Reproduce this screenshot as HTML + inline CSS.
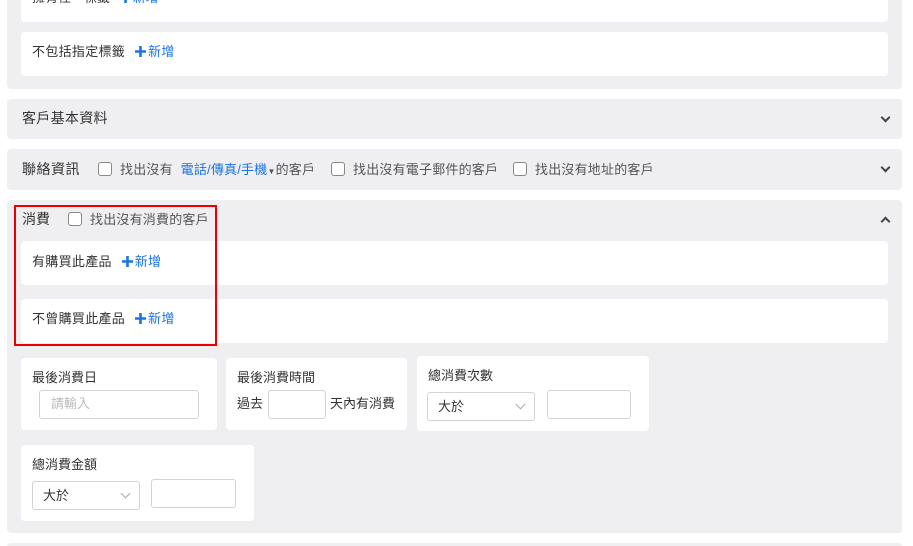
<!DOCTYPE html>
<html><head><meta charset="utf-8"><style>
*{box-sizing:border-box;margin:0;padding:0}
html,body{width:913px;height:546px;overflow:hidden}
body{background:#fff;position:relative;font-family:"Liberation Sans","Noto Sans CJK TC",sans-serif;color:#333;font-size:13px}
.a{position:absolute}
.panel{position:absolute;left:7px;width:895px;background:#efeff1;border-radius:4px}
.card{position:absolute;background:#fff;border-radius:4px}
.t{position:absolute;white-space:nowrap;line-height:16px}
.blue{color:#1a73e8}
.cb{display:inline-block;width:14px;height:14px;border:1px solid #888;border-radius:3px;background:#fff;vertical-align:-2px;margin-right:8px}
.inp{position:absolute;background:#fff;border:1px solid #d4d4d8;border-radius:3px}
.chev{position:absolute;width:7px;height:7px;border-right:2px solid #444;border-bottom:2px solid #444}
.sel{position:absolute;background:#fff;border:1px solid #d4d4d8;border-radius:3px;padding:0 10px;line-height:28px;font-size:13px}
.sc{position:absolute;width:7px;height:7px;border-right:1.5px solid #aaa;border-bottom:1.5px solid #aaa;transform:rotate(45deg)}
.plus{display:inline-block;width:11px;height:11px;vertical-align:-1px;margin-right:2px}
</style></head><body>
<div class="panel" style="top:-20px;height:109px"></div>
<div class="card" style="left:21px;top:-20px;width:867px;height:42px"></div>
<div class="t" style="left:32px;top:-10px">擁有任一標籤 <span class="blue" style="margin-left:6px"><svg class="plus" viewBox="0 0 11 11"><path d="M5.5 0V11M0 5.5H11" stroke="#1a73e8" stroke-width="2.6"/></svg>新增</span></div>
<div class="card" style="left:21px;top:32px;width:867px;height:44px"></div>
<div class="t" style="left:32px;top:44px;letter-spacing:.3px">不包括指定標籤 <span class="blue" style="margin-left:6px"><svg class="plus" viewBox="0 0 11 11"><path d="M5.5 0V11M0 5.5H11" stroke="#1a73e8" stroke-width="2.6"/></svg>新增</span></div>

<div class="panel" style="top:99px;height:40px"></div>
<div class="t" style="left:22px;top:110px;font-size:14px;letter-spacing:.3px">客戶基本資料</div>
<div class="chev" style="left:882px;top:114px;transform:rotate(45deg)"></div>

<div class="panel" style="top:149px;height:41px"></div>
<div class="t" style="left:22px;top:161px;font-size:14px;letter-spacing:.5px">聯絡資訊</div>
<div class="t" style="left:98px;top:162px;color:#555;letter-spacing:.2px"><span class="cb"></span>找出沒有 <span class="blue" style="margin-left:4px">電話/傳真/手機</span><span style="font-size:8px;color:#555">▼</span>的客戶</div>
<div class="t" style="left:331px;top:162px;color:#555;letter-spacing:.2px"><span class="cb"></span>找出沒有電子郵件的客戶</div>
<div class="t" style="left:513px;top:162px;color:#555;letter-spacing:.2px"><span class="cb"></span>找出沒有地址的客戶</div>
<div class="chev" style="left:882px;top:164px;transform:rotate(45deg)"></div>

<div class="panel" style="top:200px;height:333px"></div>
<div class="t" style="left:22px;top:211px;font-size:14px">消費</div>
<div class="t" style="left:68px;top:212px;color:#555;letter-spacing:.2px"><span class="cb"></span>找出沒有消費的客戶</div>
<div class="chev" style="left:882px;top:218px;transform:rotate(-135deg)"></div>
<div class="card" style="left:21px;top:241px;width:867px;height:44px"></div>
<div class="t" style="left:32px;top:254px;letter-spacing:.3px">有購買此產品 <span class="blue" style="margin-left:6px"><svg class="plus" viewBox="0 0 11 11"><path d="M5.5 0V11M0 5.5H11" stroke="#1a73e8" stroke-width="2.6"/></svg>新增</span></div>
<div class="card" style="left:21px;top:299px;width:867px;height:44px"></div>
<div class="t" style="left:32px;top:311px;letter-spacing:.3px">不曾購買此產品 <span class="blue" style="margin-left:6px"><svg class="plus" viewBox="0 0 11 11"><path d="M5.5 0V11M0 5.5H11" stroke="#1a73e8" stroke-width="2.6"/></svg>新增</span></div>
<div class="a" style="left:14px;top:205px;width:203px;height:141px;border:2px solid #e00"></div>

<div class="card" style="left:21px;top:358px;width:196px;height:72px"></div>
<div class="t" style="left:32px;top:370px">最後消費日</div>
<div class="inp" style="left:39px;top:390px;width:160px;height:29px"></div>
<div class="t" style="left:51px;top:396px;color:#bbb">請輸入</div>

<div class="card" style="left:226px;top:358px;width:181px;height:72px"></div>
<div class="t" style="left:237px;top:370px">最後消費時間</div>
<div class="t" style="left:237px;top:396px">過去</div>
<div class="inp" style="left:268px;top:390px;width:58px;height:29px"></div>
<div class="t" style="left:330px;top:396px">天內有消費</div>

<div class="card" style="left:417px;top:356px;width:232px;height:75px"></div>
<div class="t" style="left:428px;top:368px">總消費次數</div>
<div class="sel" style="left:427px;top:392px;width:108px;height:29px">大於</div>
<div class="sc" style="left:517px;top:401px"></div>
<div class="inp" style="left:547px;top:390px;width:84px;height:29px"></div>

<div class="card" style="left:21px;top:445px;width:233px;height:76px"></div>
<div class="t" style="left:32px;top:457px">總消費金額</div>
<div class="sel" style="left:32px;top:481px;width:108px;height:29px">大於</div>
<div class="sc" style="left:122px;top:490px"></div>
<div class="inp" style="left:151px;top:479px;width:85px;height:29px"></div>

<div class="panel" style="top:543px;height:20px"></div>
</body></html>
